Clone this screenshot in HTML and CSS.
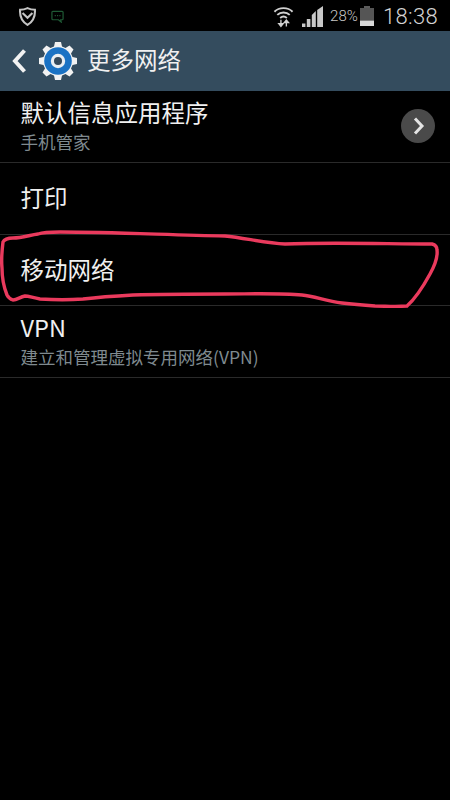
FILE: index.html
```html
<!DOCTYPE html>
<html lang="zh-CN">
<head>
<meta charset="utf-8">
<title>更多网络</title>
<link rel="stylesheet" href="styles.css">
</head>
<body>
<div class="screen">
  <div class="status">
    <div class="status-left">
      <svg class="ic-shield" viewBox="0 0 20 20"><path d="M10 1.200c2.500 1.200 5 1.700 7.800 1.700.5 6.800-1.800 12.300-7.800 15.900C4 15.200 1.700 9.700 2.200 2.900 5 2.900 7.500 2.400 10 1.200z" fill="none" stroke="#c4c4c4" stroke-width="2.200"/><path d="M4.800 6.300l5.200 5 5.200-5" fill="none" stroke="#c4c4c4" stroke-width="2.200"/></svg>
      <svg class="ic-chat" viewBox="0 0 14 14"><path d="M2 1.500h10a1 1 0 0 1 1 1v7a1 1 0 0 1-1 1h-1.500l.5 2.500-3-2.500H2a1 1 0 0 1-1-1v-7a1 1 0 0 1 1-1z" fill="none" stroke="#1f5a35" stroke-width="1.300"/><path d="M4 6h1.200M6.500 6h1.200M9 6h1.200" stroke="#1f5a35" stroke-width="1.200"/></svg>
    </div>
    <div class="status-right">
      <svg class="ic-wifi" viewBox="0 0 22 24"><g fill="none" stroke="#d0d0d0" stroke-width="2"><path d="M1.500 7C6.500 2 15.500 2 20.500 7"/><path d="M4.500 10.300c3.500-3.300 9.500-3.300 13 0"/><path d="M7.500 13.500c2-1.700 5-1.700 7 0"/></g><path d="M8.300 15.500v6M6 19.500l2.300 2.800 2.300-2.800zM14 22.500v-6M11.700 18.500l2.300-2.800 2.300 2.800z" fill="#d0d0d0" stroke="#d0d0d0" stroke-width="1.400"/></svg>
      <svg class="ic-signal" viewBox="0 0 21 21"><path d="M0 21v-3.500h3.400V21zM4.800 21v-8h3.600v8zM9.800 21V9l4-4v16zM15.200 21V4L21 0v21z" fill="#c8c8c8"/></svg>
      <span class="pct">28%</span>
      <svg class="ic-batt" viewBox="0 0 14 20"><path d="M4 0h6v2H4z" fill="#5c5c5c"/><path d="M0 2h14v12.500H0z" fill="#555"/><path d="M0 14.500h14V20H0z" fill="#d8d8d8"/></svg>
      <span class="time">18:38</span>
    </div>
  </div>
  <header class="bar">
    <svg class="ic-back" viewBox="0 0 16 26"><path d="M13.500 2.500L4 13l9.500 10.500" fill="none" stroke="#f2f2f2" stroke-width="4"/></svg>
    <svg class="ic-gear" viewBox="0 0 40 40">
      <path fill="#f2f2f2" d="M17 1h6l1 4.500 3.500 1.500 4-2.500 4 4-2.500 4 1.500 3.500 4.500 1v6l-4.500 1-1.500 3.500 2.500 4-4 4-4-2.500-3.500 1.500-1 4.500h-6l-1-4.500-3.500-1.500-4 2.500-4-4 2.500-4-1.500-3.500-4.500-1v-6l4.500-1 1.500-3.500-2.500-4 4-4 4 2.500 3.500-1.500z"/>
      <circle cx="20" cy="20" r="13.800" fill="#1a72c4"/>
      <circle cx="20" cy="20" r="7.200" fill="#e9eef2"/>
      <circle cx="20" cy="20" r="4" fill="#34495b"/>
    </svg>
    <h1 class="title">更多网络</h1>
  </header>
  <ul class="list">
    <li class="row">
      <div class="row-text">
        <div class="row-title">默认信息应用程序</div>
        <div class="row-sub">手机管家</div>
      </div>
      <span class="more"><svg viewBox="0 0 34 34"><path d="M14 9.500l7 7.500-7 7.500" fill="none" stroke="#e4e4e4" stroke-width="3"/></svg></span>
    </li>
    <li class="row"><div class="row-text"><div class="row-title">打印</div></div></li>
    <li class="row"><div class="row-text"><div class="row-title">移动网络</div></div></li>
    <li class="row">
      <div class="row-text">
        <div class="row-title">VPN</div>
        <div class="row-sub">建立和管理虚拟专用网络(VPN)</div>
      </div>
    </li>
  </ul>
  <svg class="scribble" viewBox="0 0 450 800"><path d="M13 238C22 238 30 235 38 234 C44 232 50 232 60 232 C110 232 170 235 225 236 C245 238 265 243 285 244 C330 242 390 244 432 244 C436 245 437 247 437 250 C438 258 435 265 430 274 C424 285 416 298 407 306 C395 307 385 306 375 306 C360 305 350 304 342 303 C325 301 315 296 302 295 C280 293 250 294 225 294 C195 294 165 294 133 295 C115 296 100 297 83 299 C70 300 55 300 40 299 C33 298 29 296 25 296 C20 297 17 300 13 300 C10 299 8 297 7 295 C3 285 2 275 2 268 C1 258 2 250 3 242 C4 240 8 238 13 238Z" fill="none" stroke="#ea3a5d" stroke-width="3.400"/></svg>
</div>
</body>
</html>
```
FILE: styles.css
```css
* { box-sizing: border-box; }
html, body { margin: 0; padding: 0; background: #000; }
.screen { position: relative; width: 450px; height: 800px; background: #000; overflow: hidden; font-family: "Noto Sans CJK SC", "Noto Sans", sans-serif; }
.status { height: 31px; display: flex; justify-content: space-between; align-items: center; padding: 1px 12px 0 18px; }
.status-left { display: flex; align-items: center; gap: 14px; }
.ic-shield { width: 19px; height: 19px; display: block; }
.ic-chat { width: 13px; height: 13px; display: block; }
.status-right { display: flex; align-items: center; }
.ic-wifi { width: 21px; height: 23px; display: block; margin-right: 8px; }
.ic-signal { width: 21px; height: 21px; display: block; margin-right: 7px; }
.pct { font-family: Roboto, sans-serif; font-size: 15px; font-weight: 300; color: #c8c8c8; width: 30px; }
.ic-batt { width: 14px; height: 20px; display: block; margin-right: 9px; }
.time { font-family: Roboto, sans-serif; font-size: 22px; font-weight: 300; color: #d4d4d4; letter-spacing: 0.3px; }
.bar { height: 60px; background: #344c5e; display: flex; align-items: center; padding-left: 11px; }
.ic-back { width: 16px; height: 26px; display: block; }
.ic-gear { width: 40px; height: 40px; display: block; margin-left: 11px; }
.title { margin: 0 0 4px 9px; font-size: 23.500px; font-weight: 400; color: #f0f0f0; line-height: 30px; }
.list { list-style: none; margin: 0; padding: 0; }
.row { height: 71.750px; display: flex; align-items: center; justify-content: space-between; padding: 0 15px 0 20.500px; border-bottom: 1px solid #2a2a2a; }
.row-text { padding-bottom: 2px; }
.row-title { font-size: 23.500px; line-height: 30px; color: #f0f0f0; font-weight: 400; }
.row-sub { font-size: 17.500px; line-height: 24px; margin-top: 3px; color: #7f8a8f; }
.more { width: 34px; height: 34px; border-radius: 50%; background: #4a4a4a; display: block; }
.more svg { width: 34px; height: 34px; display: block; }
.scribble { position: absolute; left: 0; top: 0; width: 450px; height: 800px; pointer-events: none; }
```
